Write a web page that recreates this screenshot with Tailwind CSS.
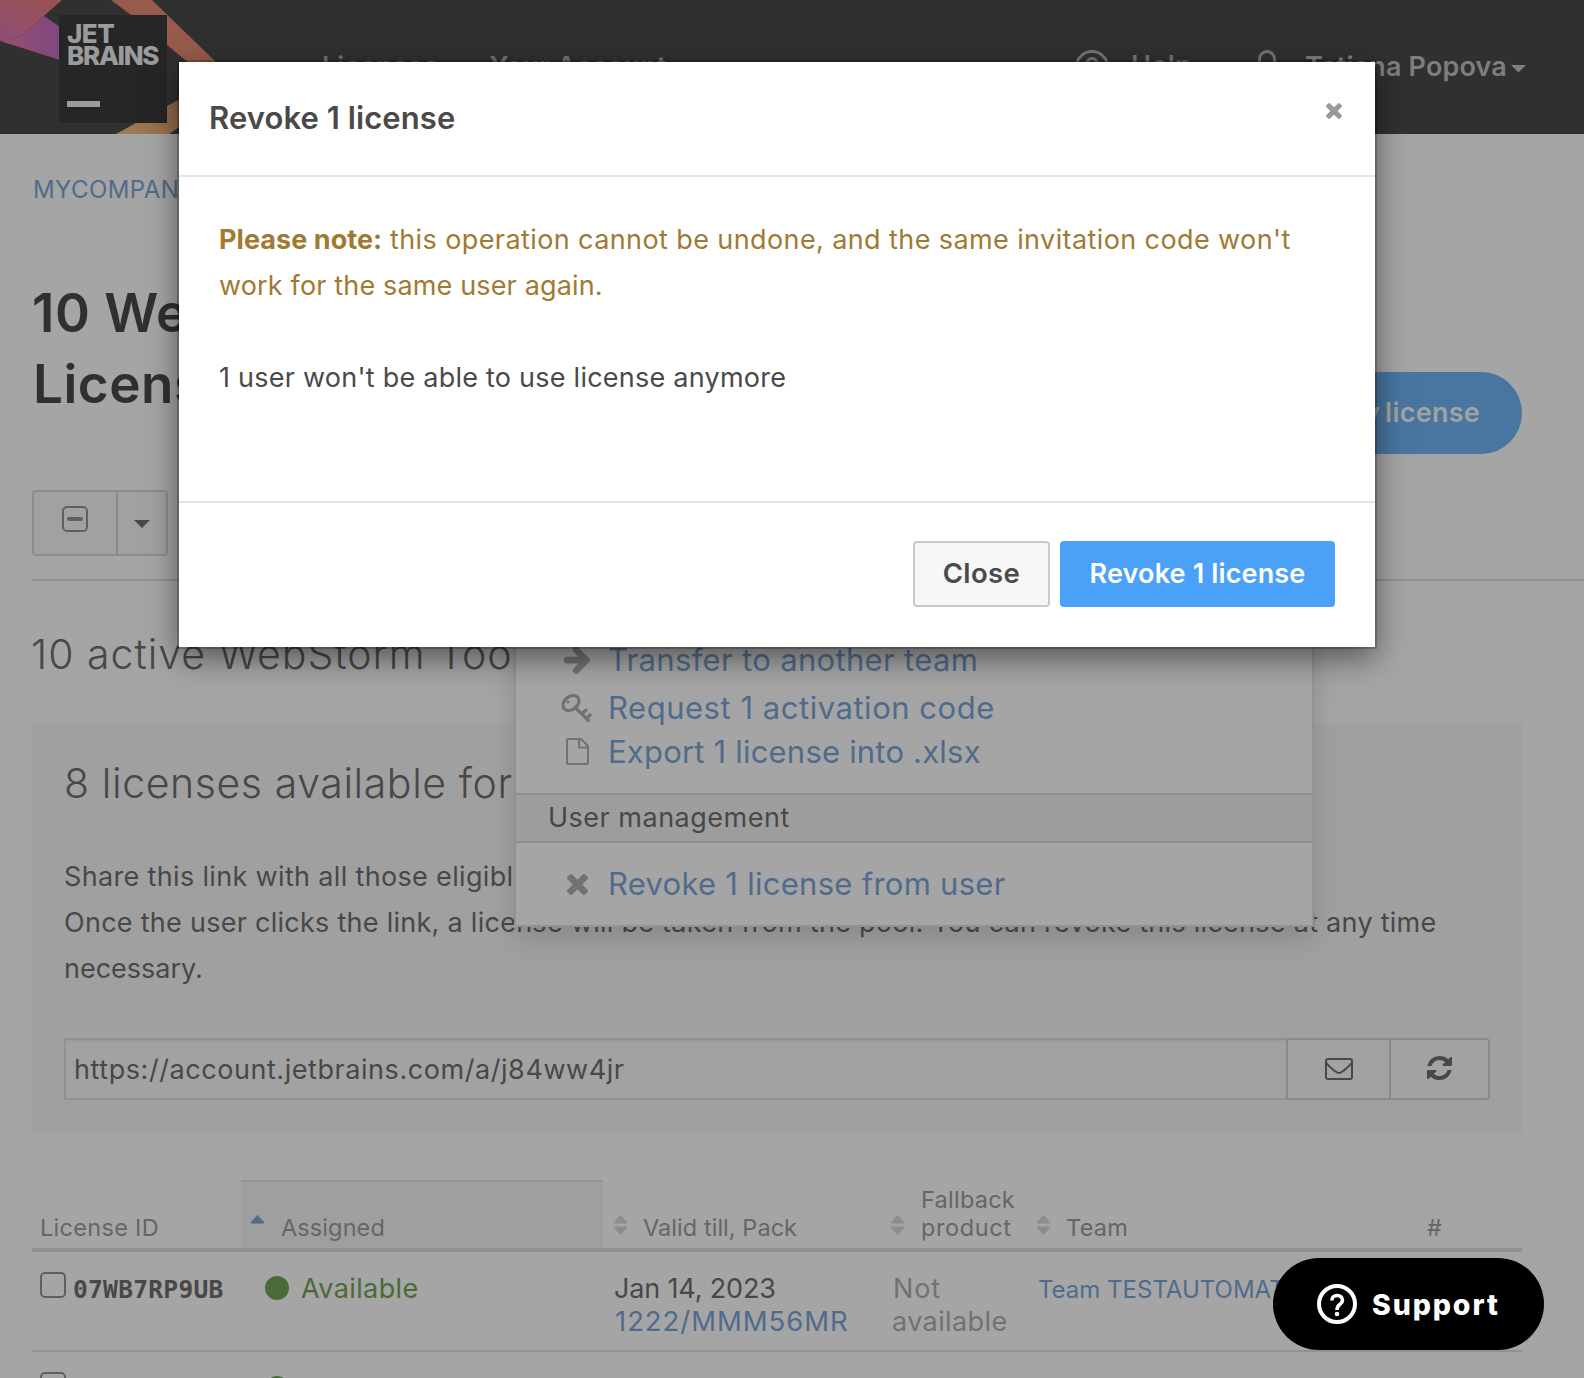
<!DOCTYPE html>
<html lang="en">
<head>
<meta charset="utf-8">
<title>JetBrains Account</title>
<script src="https://cdn.jsdelivr.net/npm/@tailwindcss/browser@4"></script>
</head>
<body class="relative h-[1378px] w-[1584px] overflow-hidden bg-[#a5a5a5] font-[Inter,sans-serif] text-[27px] tracking-[0.25px] text-[#484848]">

<!-- Top bar -->
<header class="relative flex h-[134px] items-start justify-between bg-[#303030] pt-[46px] pr-[58px] pl-[322px] leading-10 font-semibold text-[#7e7e7e]">
  <svg class="absolute top-0 left-0" width="240" height="134" viewBox="0 0 240 134">
    <defs>
      <linearGradient id="pk" x1="0" y1="1" x2="1" y2="0"><stop offset="0" stop-color="#8f4d78"/><stop offset=".55" stop-color="#965060"/><stop offset="1" stop-color="#99524f"/></linearGradient>
      <linearGradient id="pu" x1="0" y1="0" x2="1" y2="0"><stop offset="0" stop-color="#964e70"/><stop offset="1" stop-color="#80487e"/></linearGradient>
      <linearGradient id="br" x1="0" y1="1" x2="1" y2="0"><stop offset="0" stop-color="#a07e54"/><stop offset="1" stop-color="#8d6142"/></linearGradient>
    </defs>
    <path d="M0 41L20 37L44 16L60 27V60Z" fill="url(#pu)"/>
    <path d="M0 0H62L20 37L0 41Z" fill="url(#pk)"/>
    <path d="M111 0H152L218 64H190L131 15Z" fill="#985a4a"/>
    <path d="M116 134L137 122.500L167 106L182 98V125L169 134Z" fill="url(#br)"/>
  </svg>
  <div class="absolute top-[15px] left-[59px] h-[108px] w-[108px] bg-[#262626] pt-[6px] pl-[8px] text-[26px] leading-[22px] font-extrabold tracking-[-1.3px] text-[#9b9b9b]">
    <div class="pt-[2px] tracking-[-0.5px]">JET</div>
    <div>BRAINS</div>
    <div class="mt-[34px] h-[6px] w-[33px] bg-[#9b9b9b]"></div>
  </div>
  <nav class="flex gap-[51px] text-[26.5px] tracking-[0.3px] text-[#747474]"><span>Licenses</span><span>Your Account</span></nav>
  <div class="flex">
    <svg class="mt-[4px] mr-[22px]" width="34" height="34" viewBox="0 0 34 34" fill="none" stroke="#747474" stroke-width="3"><circle cx="17" cy="17" r="15.500"/><path d="M12 13.500a5 5 0 1 1 7 4.500q-2 1-2 3M17 23v3"/></svg>
    <span class="mr-[66px] text-[#747474]">Help</span>
    <svg class="mt-[4px] mr-[29px]" width="18" height="34" viewBox="0 0 18 34" fill="none" stroke="#747474" stroke-width="3"><rect x="1.500" y="1.500" width="15" height="18" rx="7.500"/><path d="M0 31q9-9 18 0"/></svg>
    <span class="pt-px tracking-[0.15px]">Tatiana Popova</span>
    <svg class="mt-[19px] ml-[4px]" width="15" height="8" viewBox="0 0 15 8" fill="#7e7e7e"><path d="M0 0H15L7.500 7.500Z"/></svg>
  </div>
</header>

<main class="h-[1244px] overflow-hidden pl-8">
  <a class="mt-10 block h-[31px] pl-px text-[24px] leading-[31px] tracking-[0.4px] text-[#506b8b]">MYCOMPANY</a>

  <div class="mt-[72px] flex h-[177px] items-start justify-between pr-[62px]">
    <h1 class="mt-px text-[53px] leading-[71px] font-semibold tracking-[0.5px] text-[#303030]">10 WebStorm<br><span class="pl-[1px]">Licenses</span></h1>
    <a class="mt-[95px] flex h-[82px] items-center rounded-full bg-[#4976a0] px-[42px] text-[27px] font-semibold [word-spacing:-2px] text-[#a3a3a3]">Buy license</a>
  </div>

  <div class="mt-[36px] flex h-[66px] w-[136px] rounded-[4px] border-2 border-[#8c8c8c] bg-[#a1a1a1]">
    <div class="w-[84px] border-r-2 border-[#8c8c8c] pt-[14px] pl-[28px]">
      <svg width="26" height="26" viewBox="0 0 26 26"><rect x="1" y="1" width="24" height="24" rx="4" fill="none" stroke="#606060" stroke-width="2"/><rect x="5" y="11" width="16" height="4" rx="2" fill="#606060"/></svg>
    </div>
    <svg class="mt-[28px] ml-[16px]" width="16" height="8" viewBox="0 0 16 8" fill="#484848"><path d="M0 0H16L8 8Z"/></svg>
  </div>

  <hr class="mt-[23px] border-t-2 border-[#919191]">

  <h2 class="mt-[48px] -ml-px h-[50px] text-[41px] leading-[50px] font-light tracking-[1px]">10 active WebStorm Tool</h2>

  <section class="mt-[45px] h-[408px] w-[1490px] bg-[#a0a0a0] px-8 pt-[34px]">
    <h3 class="h-[50px] text-[41px] leading-[50px] font-light tracking-[0.6px]">8 licenses available for</h3>
    <p class="mt-[46px] leading-[46px] whitespace-nowrap"><span class="tracking-[0.34px]">Share this link with all those eligible</span><br><span class="tracking-[0.27px]">Once the user clicks the link, a license will be taken from the pool. You can revoke this license at any time</span><br><span class="tracking-[0px]">necessary.</span></p>
    <div class="mt-[46px] flex h-[62px] w-[1426px]">
      <div class="h-full w-[1222px] border-2 border-r-0 border-[#929292] bg-[#a2a2a2] pl-[8px] leading-[60px] tracking-[0.56px] shadow-[inset_0_2px_2px_rgba(0,0,0,0.04)]">https://account.jetbrains.com/a/j84ww4jr</div>
      <div class="flex flex-1 rounded-r-[4px] border-2 border-[#8a8a8a] bg-[#a2a2a2]">
        <div class="w-[103px] border-r-2 border-[#8a8a8a] pt-[18px] pl-[37px]">
          <svg width="28" height="22" viewBox="0 0 28 22" fill="none" stroke="#484848" stroke-width="2"><rect x="1" y="1" width="26" height="20" rx="2"/><path d="M1 4.500C4 9 12 15 14 15S24 9 27 4.500"/></svg>
        </div>
        <svg class="mt-[16px] ml-[36px]" width="25" height="24" viewBox="0 0 1536 1536" preserveAspectRatio="none" fill="#484848"><path d="M1511 928q0 5-1 7-64 268-268 434.500t-478 166.500q-146 0-282.500-55t-243.500-157l-129 129q-19 19-45 19t-45-19-19-45v-448q0-26 19-45t45-19h448q26 0 45 19t19 45-19 45l-137 137q71 66 161 102t187 36q134 0 250-65t186-179q11-17 53-117 8-23 30-23h192q13 0 22.500 9.500t9.500 22.500zm25-800v448q0 26-19 45t-45 19h-448q-26 0-45-19t-19-45 19-45l138-138q-148-137-349-137-134 0-250 65t-186 179q-11 17-53 117-8 23-30 23h-199q-13 0-22.500-9.500t-9.500-22.500v-7q65-268 270-434.500t480-166.500q146 0 284 55.500t245 156.500l130-129q19-19 45-19t45 19 19 45z"/></svg>
      </div>
    </div>
  </section>

  <!-- License table -->
  <div class="mt-[48px] w-[1490px]">
    <div class="grid h-[72px] grid-cols-[209px_362px_277px_146px_391px_105px] border-b-4 border-[#929292] text-[23.5px] leading-[28px] tracking-[0.25px] text-[#666]">
      <div class="flex items-end pb-[6px] pl-[8px] tracking-[0.3px]">License ID</div>
      <div class="flex items-end border-t-2 border-[#949494] bg-[#9f9f9f] pb-[6px] pl-[9px] tracking-[0.1px]">
        <svg class="mr-[16px] mb-[7px]" width="15" height="20" viewBox="0 0 15 20"><path d="M7.500 0L14 7Q15 8.500 13 8.500H2Q0 8.500 1 7Z" fill="#506b8b"/></svg>Assigned</div>
      <div class="flex items-end pb-[6px] pl-[10px] tracking-[0.05px]">
        <svg class="mr-[15px] mb-[7px]" width="15" height="20" viewBox="0 0 15 20" fill="#8d8d8d"><path d="M7.500 0L14 7Q15 8.500 13 8.500H2Q0 8.500 1 7ZM7.500 20L14 13Q15 11.500 13 11.500H2Q0 11.500 1 13Z"/></svg>Valid till, Pack</div>
      <div class="flex items-end pb-[6px] pl-[10px]">
        <svg class="mr-[16px] mb-[7px] shrink-0" width="15" height="20" viewBox="0 0 15 20" fill="#8d8d8d"><path d="M7.500 0L14 7Q15 8.500 13 8.500H2Q0 8.500 1 7ZM7.500 20L14 13Q15 11.500 13 11.500H2Q0 11.500 1 13Z"/></svg><span>Fallback<br><span class="tracking-[0.6px]">product</span></span></div>
      <div class="flex items-end pb-[6px] pl-[10px] tracking-[0.3px]">
        <svg class="mr-[15px] mb-[7px]" width="15" height="20" viewBox="0 0 15 20" fill="#8d8d8d"><path d="M7.500 0L14 7Q15 8.500 13 8.500H2Q0 8.500 1 7ZM7.500 20L14 13Q15 11.500 13 11.500H2Q0 11.500 1 13Z"/></svg>Team</div>
      <div class="flex items-end pb-[6px] pl-[10px]">#</div>
    </div>
    <div class="grid h-[100px] grid-cols-[209px_362px_277px_146px_391px_105px] border-b-2 border-[#929292] pt-[20px] leading-[33px]">
      <div class="flex items-start pl-2">
        <span class="h-[26px] w-[26px] rounded-[5px] border-2 border-[#606060]"></span>
        <span class="ml-[7px] pt-[2px] font-['DejaVu_Sans_Mono',monospace] text-[24.6px] leading-[32px] font-bold tracking-[0.25px]">07WB7RP9UB</span>
      </div>
      <div class="flex h-[33px] items-center pl-[24px] tracking-[0.4px] text-[#4a6b37]"><span class="mr-[12px] mb-px h-6 w-6 rounded-full bg-[#4a6b37]"></span>Available</div>
      <div class="pl-[11px] tracking-[-0.15px]">Jan 14, 2023<br><span class="pl-px text-[27.5px] tracking-[0.95px] text-[#506b8b]">1222/MMM56MR</span></div>
      <div class="pl-[12px] tracking-[0.4px] text-[#727272]"><span class="pl-px tracking-[0.8px]">Not</span><br>available</div>
      <div class="pt-px pl-[12px] text-[24px] tracking-[0px] text-[#506b8b]">Team TESTAUTOMATION</div>
      <div></div>
    </div>
    <div class="grid h-[100px] grid-cols-[209px_362px_277px_146px_391px_105px] pt-[20px] leading-[33px]">
      <div class="pl-2"><span class="block h-[26px] w-[26px] rounded-[5px] border-2 border-[#606060]"></span></div>
      <div class="pt-[4px] pl-[24px]"><span class="block h-6 w-6 rounded-full bg-[#4a6b37]"></span></div>
    </div>
  </div>
</main>

<!-- Actions dropdown -->
<div class="absolute top-[560px] left-[514px] h-[367px] w-[800px] border-2 border-[#929292] bg-[#a5a5a5] pt-[78px] text-[31px] text-[#506b8b] shadow-[0_12px_24px_rgba(0,0,0,0.14)]">
  <div class="flex h-[40px] items-center pl-[45px]">
    <span class="flex w-[47px] pl-[3px]"><svg width="26" height="27" viewBox="128 221 1472 1520" preserveAspectRatio="none" fill="#727272"><path d="M1600 960q0 54-37 91l-651 651q-39 37-91 37-51 0-90-37l-75-75q-38-38-38-91t38-91l293-293h-704q-52 0-84.500-37.500t-32.500-90.500v-128q0-53 32.500-90.500t84.500-37.500h704l-293-294q-38-36-38-90t38-90l75-75q38-38 90-38 53 0 91 38l651 651q37 35 37 90z"/></svg></span>
    <span class="tracking-[0.33px]">Transfer to another team</span>
  </div>
  <div class="mt-[6px] flex h-[44px] items-center pl-[45px]">
    <span class="flex w-[47px]"><svg width="31" height="29" viewBox="0 0 31 29" fill="none" stroke="#727272" stroke-width="3.200"><ellipse cx="10" cy="9" rx="8.800" ry="6.500" transform="rotate(-40 10 9)"/><path d="M13 12.500L28.500 27.500M21 20L25 16M25.500 24.500L30 20M24 15.500L26 17.500"/><circle cx="7" cy="8" r="1.500" fill="#727272" stroke="none"/></svg></span>
    <span class="tracking-[0.53px]">Request 1 activation code</span>
  </div>
  <div class="flex h-[44px] items-center pl-[45px]">
    <span class="flex w-[47px] -mt-[2px] pl-[5px]"><svg width="23" height="27" viewBox="0 0 23 27" fill="none" stroke="#727272" stroke-width="2"><path d="M1 2Q1 1 2 1H15L22 8V25Q22 26 21 26H2Q1 26 1 25ZM13 1V9.500H22" stroke-linejoin="round"/></svg></span>
    <span class="tracking-[0.2px]">Export 1 license into .xlsx</span>
  </div>
  <div class="mt-[19px] h-[50px] border-y-2 border-[#8f8f8f] bg-[#9d9d9d] pl-[32px] text-[27px] leading-[46px] tracking-[0.5px] text-[#484848]">User management</div>
  <div class="mt-[19px] flex h-[44px] items-center pl-[45px]">
    <span class="flex w-[47px] pl-[6px]"><svg width="21" height="21" viewBox="302 366 1188 1188" fill="#727272"><path d="M1490 1322q0 40-28 68l-136 136q-28 28-68 28t-68-28l-294-294-294 294q-28 28-68 28t-68-28l-136-136q-28-28-28-68t28-68l294-294-294-294q-28-28-28-68t28-68l136-136q28-28 68-28t68 28l294 294 294-294q28-28 68-28t68 28l136 136q28 28 28 68t-28 68l-294 294 294 294q28 28 28 68z"/></svg></span>
    <span class="tracking-[0.27px]">Revoke 1 license from user</span>
  </div>
</div>

<!-- Revoke dialog -->
<div class="absolute top-[62px] left-[179px] h-[585px] w-[1196px] bg-white text-[#4a4a4a] shadow-[0_0_0_2px_rgba(0,0,0,0.2),0_10px_30px_rgba(0,0,0,0.5)]">
  <div class="flex h-[115px] items-start justify-between border-b-2 border-[#e5e5e5] pt-[36px] pr-[33px] pl-[30px]">
    <h4 class="text-[31px] leading-10 font-semibold tracking-[0.08px]">Revoke 1 license</h4>
    <svg class="mt-[5px]" width="16" height="16" viewBox="302 366 1188 1188" fill="#999"><path d="M1490 1322q0 40-28 68l-136 136q-28 28-68 28t-68-28l-294-294-294 294q-28 28-68 28t-68-28l-136-136q-28-28-28-68t28-68l294-294-294-294q-28-28-28-68t28-68l136-136q28-28 68-28t68 28l294 294 294-294q28-28 68-28t68 28l136 136q28 28 28 68t-28 68l-294 294 294 294q28 28 28 68z"/></svg>
  </div>
  <div class="h-[324px] pt-10 pl-10 leading-[46px] whitespace-nowrap">
    <p class="text-[#a07a33]"><b class="font-bold tracking-[0.05px]">Please note:</b> <span class="tracking-[0.4px]">this operation cannot be undone, and the same invitation code won't</span><br><span class="tracking-[0.15px]">work for the same user again.</span></p>
    <p class="mt-[46px] tracking-[0.24px]">1 user won't be able to use license anymore</p>
  </div>
  <div class="flex justify-end gap-[10px] border-t-2 border-[#e5e5e5] pt-[38px] pr-10 text-[27px] font-semibold">
    <button class="h-[66px] w-[137px] rounded-[4px] border-2 border-[#cacaca] bg-[#f7f7f7] text-[27.5px] tracking-[0.4px]">Close</button>
    <button class="h-[66px] w-[275px] rounded-[4px] bg-[#4aa1f7] tracking-[0.15px] text-white">Revoke 1 license</button>
  </div>
</div>

<!-- Support launcher -->
<button class="absolute top-[1258px] left-[1273px] flex h-[92px] w-[271px] items-center rounded-full bg-black pl-[44px] text-[28.5px] font-extrabold tracking-[1.9px] text-white">
  <svg class="mr-[15px]" width="40" height="40" viewBox="0 0 40 40" fill="none" stroke="#fff" stroke-width="4"><circle cx="20" cy="20" r="18"/><path d="M14.800 16.500C14.800 9.800 25.500 10 25.500 16.200C25.500 20.500 20 20 20 26" stroke-width="3.600"/><circle cx="20" cy="30" r="2.300" fill="#fff" stroke="none"/></svg><span class="mt-[2px]">Support</span>
</button>
</body>
</html>
